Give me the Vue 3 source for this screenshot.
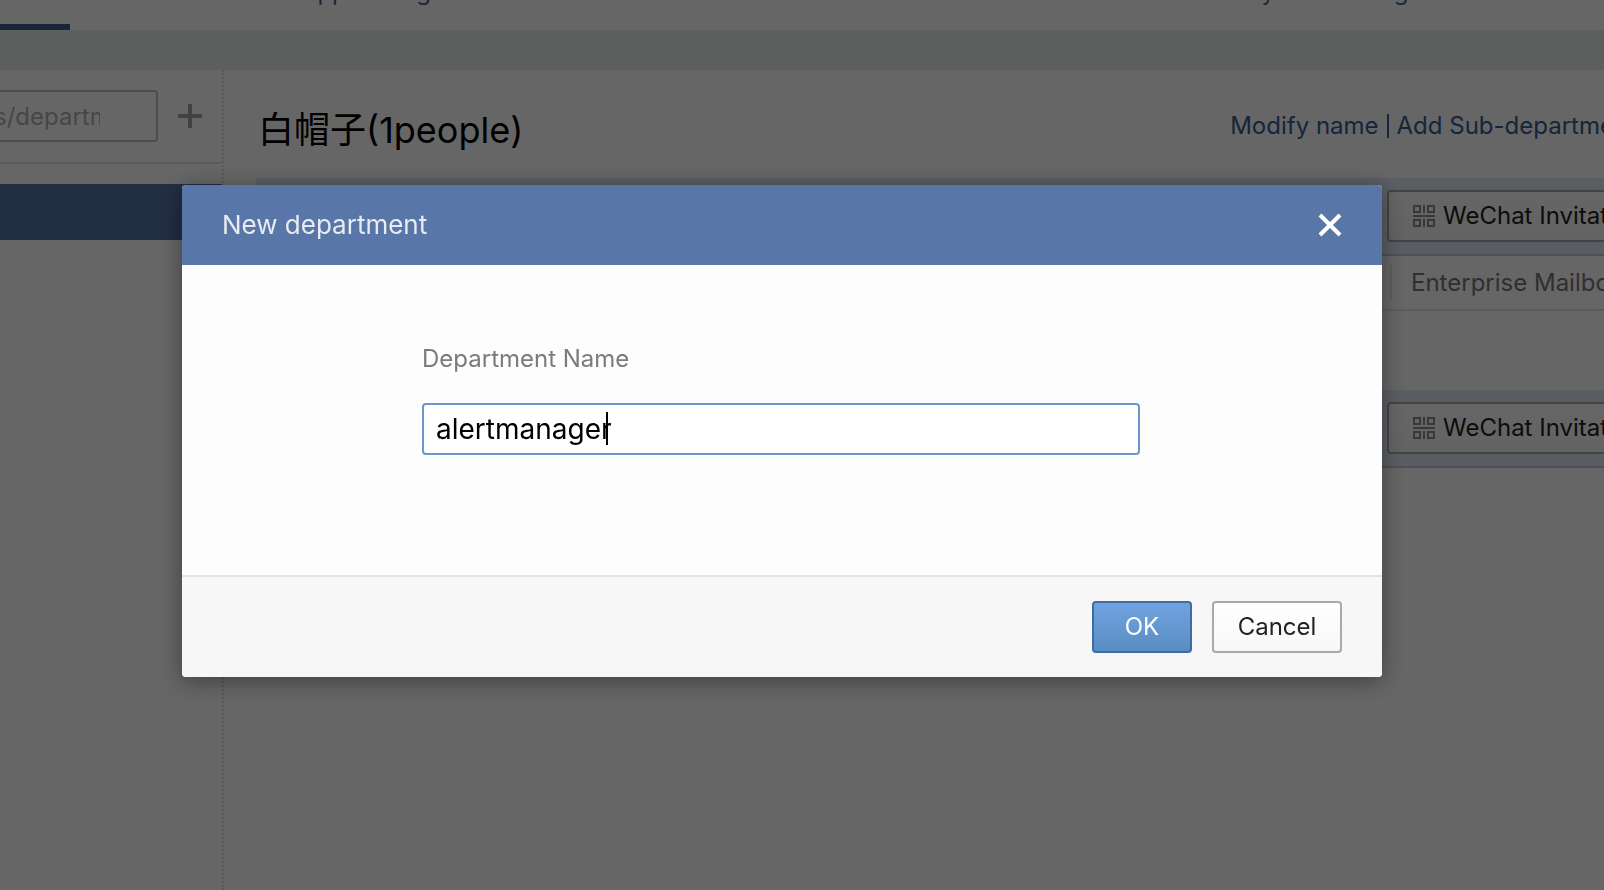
<script setup>
import { ref } from 'vue'

const tabs = ['Collaboration', 'App Management', 'Customers and Connections', 'External Contacts', 'Security and Management']
const name = ref('alertmanager')
const search = ref('')
</script>

<template>
  <div class="page">
    <nav class="nav">
      <span class="marker"></span>
      <a v-for="(tab, i) in tabs" :key="tab" href="#" :class="'tab tab-' + i">{{ tab }}</a>
    </nav>

    <div class="workspace">
      <aside class="sidebar">
        <div class="search">
          <input v-model="search" class="search-box" type="text" aria-label="Search members/departments" placeholder="s/departments" />
          <button class="add" type="button" aria-label="Add">
            <svg viewBox="0 0 24 24" width="24" height="24"><path d="M12 0v24M0 12h24" stroke="#a5a5a5" stroke-width="4" /></svg>
          </button>
        </div>
        <div class="selected"></div>
      </aside>

      <main class="main">
        <div class="content">
          <header class="heading">
            <h1>白帽子(1people)</h1>
            <div class="links">
              <a href="#">Modify name</a>
              <span class="bar"></span>
              <a href="#">Add Sub-department</a>
            </div>
          </header>
          <div v-for="n in 2" :key="n" class="group">
            <div class="band">
              <button class="invite" type="button">
                <svg viewBox="0 0 22 22" width="22" height="22" fill="none" stroke="#8c8c8c" stroke-width="2">
                  <path d="M1 1h6v6H1zM15 1h6v6h-6zM1 15h6v6H1zM15 15h6v6h-6zM11 0v8M11 14v8M0 11h22" />
                </svg>
                <span>WeChat Invitation</span>
              </button>
            </div>
            <table v-if="n === 1" class="members">
              <thead>
                <tr><td></td><th scope="col"><span>Enterprise Mailbox</span></th></tr>
              </thead>
            </table>
          </div>
        </div>
      </main>
    </div>

    <div class="overlay">
      <form class="dialog" role="dialog" aria-modal="true" aria-labelledby="dialog-title" @submit.prevent>
        <header class="dialog-head">
          <h2 id="dialog-title">New department</h2>
          <button class="close" type="button" aria-label="Close">
            <svg viewBox="0 0 24 24" width="24" height="24"><path d="M2 2l20 20M22 2L2 22" stroke="#fff" stroke-width="4" /></svg>
          </button>
        </header>
        <div class="dialog-body">
          <label for="department">Department Name</label>
          <div class="field">
            <input id="department" v-model="name" type="text" />
            <span class="caret"></span>
          </div>
        </div>
        <footer class="dialog-foot">
          <button class="btn primary" type="submit">OK</button>
          <button class="btn" type="button">Cancel</button>
        </footer>
      </form>
    </div>
  </div>
</template>

<style>
body {
  background: #fff;
}
</style>

<style scoped>
.page {
  display: flex;
  flex-direction: column;
  min-height: 100vh;
  overflow: hidden;
  font-family: Inter, "Noto Sans CJK SC", sans-serif;
  font-size: 24px;
  line-height: 32px;
  color: #222;
}
.page * {
  box-sizing: border-box;
}
a {
  text-decoration: none;
}
button,
input {
  font: inherit;
}
svg {
  display: block;
  flex: none;
}
.nav {
  position: relative;
  display: flex;
  gap: 52px;
  height: 30px;
  padding-left: 98px;
  overflow: hidden;
  background: #fff;
}
.tab {
  flex: none;
  margin-top: -24px;
  color: #4a6792;
  white-space: nowrap;
}
.marker {
  position: absolute;
  left: 0;
  bottom: 0;
  width: 70px;
  height: 6px;
  background: #3c5c8a;
}
.workspace {
  display: flex;
  flex: 1;
  border-top: 40px solid #e6eeea;
}
.sidebar {
  flex: none;
  width: 224px;
  border-right: 2px dotted #dcdcdc;
  overflow: hidden;
}
.search {
  display: flex;
  align-items: center;
  gap: 20px;
  height: 94px;
  padding-right: 20px;
  margin-left: -16px;
  border-bottom: 2px solid #e4e4e4;
}
.search-box {
  flex: 1;
  min-width: 0;
  height: 52px;
  padding: 0 56px 0 8px;
  border: 2px solid #b6c1d0;
  border-radius: 4px;
  background: #fff;
}
.search-box::placeholder {
  color: #b0b0b0;
  opacity: 1;
}
.add,
.close {
  padding: 0;
  border: 0;
  background: none;
}
.selected {
  height: 56px;
  margin-top: 20px;
  background: #5573a3;
}
.main {
  flex: 1;
  min-width: 0;
  padding-left: 32px;
  overflow: hidden;
}
.content {
  width: calc(100% + 200px);
}
.heading {
  display: flex;
  align-items: center;
  justify-content: space-between;
  height: 108px;
  padding: 12px 168px 0 2px;
}
h1 {
  margin: 0;
  font-size: 36px;
  font-weight: 400;
  line-height: 48px;
  color: #000;
}
.links {
  display: flex;
  align-items: center;
  gap: 8px;
  margin-top: -8px;
}
.links a {
  color: #355c94;
  white-space: nowrap;
}
.bar {
  width: 2px;
  height: 24px;
  background: #355c94;
}
.band {
  display: flex;
  justify-content: flex-end;
  height: 78px;
  padding: 12px 157px 0 0;
  border-bottom: 2px solid #c0cbd9;
  background: #e2eaf5;
}
.invite {
  display: flex;
  align-items: center;
  gap: 8px;
  width: 260px;
  height: 52px;
  padding: 0 24px;
  border: 2px solid #a9a9a9;
  border-radius: 4px;
  background: linear-gradient(#fff, #f7f7f7);
  color: #222;
  white-space: nowrap;
}
.members {
  width: 100%;
  margin-bottom: 79px;
  border-collapse: collapse;
  table-layout: fixed;
}
.members th {
  width: 414px;
  height: 54px;
  padding: 0;
  color: #777;
  font-weight: 400;
  text-align: left;
}
.members tr {
  border-bottom: 2px solid #e4e7eb;
}
.members th span {
  display: block;
  padding: 2px 0 2px 19px;
  border-left: 2px solid #e8e8e8;
}
.overlay {
  position: fixed;
  inset: 0;
  display: flex;
  align-items: flex-start;
  justify-content: center;
  padding: 185px 40px 0 0;
  background: rgba(0, 0, 0, 0.6);
}
.dialog {
  width: 1200px;
  max-width: 100%;
  border-radius: 4px;
  overflow: hidden;
  background: #fdfdfd;
  box-shadow: 0 4px 24px rgba(0, 0, 0, 0.4);
}
.dialog-head {
  display: flex;
  align-items: center;
  justify-content: space-between;
  height: 80px;
  padding: 0 40px;
  background: #5877a8;
}
h2 {
  margin: 0;
  font-size: 26px;
  font-weight: 400;
  color: #e8ebf0;
}
.dialog-body {
  padding: 78px 242px 120px 240px;
}
.dialog-body label {
  display: block;
  margin-bottom: 28px;
  color: #7b7b7b;
}
.field {
  position: relative;
}
.field input {
  display: block;
  width: 100%;
  height: 52px;
  padding: 0 12px;
  border: 2px solid #6d95c9;
  border-radius: 4px;
  outline: 0;
  background: #fff;
  font-size: 28px;
  color: #000;
}
.caret {
  position: absolute;
  top: 9px;
  left: 184px;
  width: 2px;
  height: 33px;
  background: #000;
}
.dialog-foot {
  display: flex;
  justify-content: flex-end;
  gap: 20px;
  height: 102px;
  padding: 24px 40px;
  border-top: 2px solid #e2e4e8;
  background: #f7f7f7;
}
.btn {
  width: 130px;
  height: 52px;
  padding: 0;
  border: 2px solid #a9a9a9;
  border-radius: 4px;
  background: linear-gradient(#fff, #f7f7f7);
  color: #222;
}
.primary {
  width: 100px;
  border-color: #3c6ca3;
  background: linear-gradient(#71a2e1, #5a8dc2);
  color: #fff;
}
</style>
